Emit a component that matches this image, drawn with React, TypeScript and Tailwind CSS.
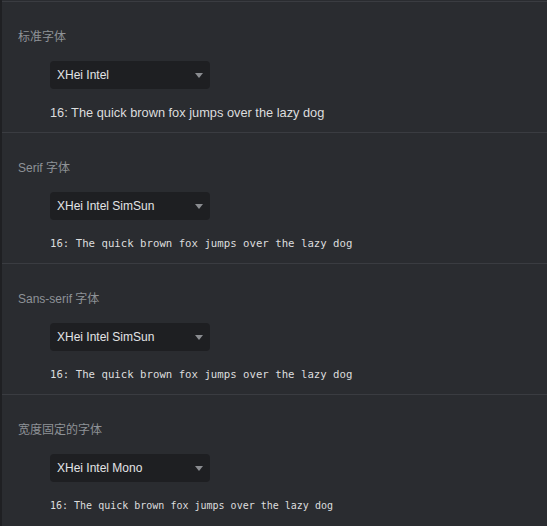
import React from "react";

const sans = '"Liberation Sans", "Noto Sans CJK SC", sans-serif';
const mono = '"DejaVu Sans Mono", "Liberation Mono", monospace';

function Caret() {
  return (
    <svg width="8" height="5" viewBox="0 0 8 5" className="shrink-0">
      <path d="M0 0 L8 0 L4 5 Z" fill="#8a8c90" />
    </svg>
  );
}

function Section({
  label,
  value,
  sample,
  monoSize,
}: {
  label: string;
  value: string;
  sample: string;
  monoSize?: string;
}) {
  return (
    <div className="border-t border-[#3a3c41] pt-[27px] pb-[11px]">
      <div
        className="pl-[16px] text-[12px] leading-[16px] text-[#8e9297]"
        style={{ fontFamily: sans }}
      >
        {label}
      </div>
      <div className="pl-[48px] mt-[16px]">
        <div className="flex h-[28px] w-[160px] items-center justify-between rounded-[4px] bg-[#1e1f22] pl-[7px] pr-[7px]">
          <span
            className="text-[12px] text-[#e3e4e6]"
            style={{ fontFamily: sans }}
          >
            {value}
          </span>
          <Caret />
        </div>
      </div>
      <div
        className={
          "pl-[48px] mt-[16px] h-[16px] leading-[16px] text-[#dcddde] " +
          (monoSize ? "" : "text-[12.8px]")
        }
        style={{ fontFamily: monoSize ? mono : sans, fontSize: monoSize }}
      >
        {sample}
      </div>
    </div>
  );
}

export default function App() {
  const s = "16: The quick brown fox jumps over the lazy dog";
  return (
    <div className="h-[526px] w-[547px] overflow-hidden bg-[#1f2023] pl-[2px]">
      <div className="h-full bg-[#2a2c30] pt-[1px]">
        <Section label="标准字体" value="XHei Intel" sample={s} />
        <Section label="Serif 字体" value="XHei Intel SimSun" sample={s} monoSize="10.7px" />
        <Section label="Sans-serif 字体" value="XHei Intel SimSun" sample={s} monoSize="10.7px" />
        <Section label="宽度固定的字体" value="XHei Intel Mono" sample={s} monoSize="10px" />
      </div>
    </div>
  );
}
